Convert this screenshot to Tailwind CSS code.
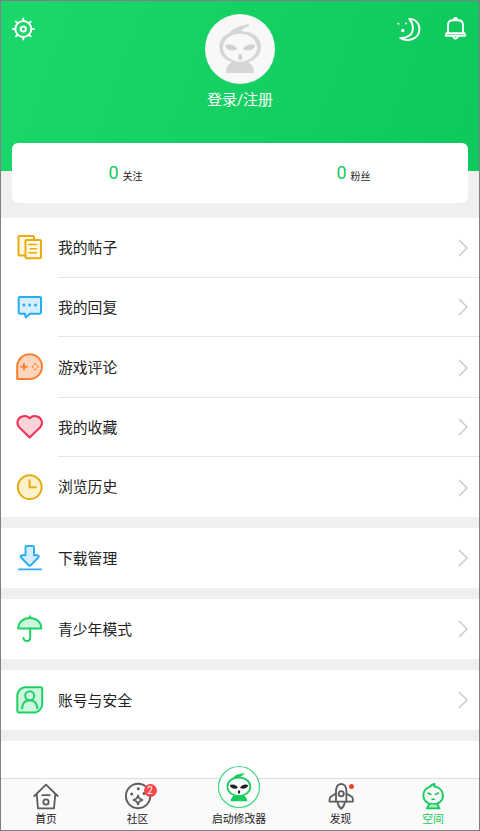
<!DOCTYPE html>
<html lang="zh-CN">
<head>
<meta charset="utf-8">
<title>空间</title>
<script src="https://cdn.jsdelivr.net/npm/@tailwindcss/browser@4"></script>
</head>
<body class="bg-white">
<div class="w-[480px] h-[831px] border border-[#808080] bg-[#efefef] overflow-hidden flex flex-col text-[#222] font-['Roboto','Noto_Sans_CJK_SC',sans-serif]">

  <header class="h-[170px] shrink-0 bg-linear-[110deg] from-[#1cd76a] to-[#0ec85b] flex justify-between items-start text-white">
    <div class="w-[110px] pl-[9px] pt-[15px]">
      <svg class="size-[26px]" viewBox="10 16 26 26" fill="none" stroke="currentColor" stroke-width="2">
        <circle cx="23.3" cy="29" r="8"/><circle cx="23.3" cy="29" r="2.6"/>
        <path stroke-linecap="round" stroke-width="1.9" d="M23.3 20.5v-2M23.3 37.5v2M14.8 29h-2M31.8 29h2M17.2 22.9l-1.3-1.3M29.4 22.9l1.3-1.3M17.2 35.1l-1.3 1.3M29.4 35.1l1.3 1.3"/>
      </svg>
    </div>
    <div class="flex flex-col items-center pt-[13px]">
      <svg class="size-[70px]" viewBox="0 0 70 70">
        <circle cx="35" cy="35" r="35" fill="#f8f8f8"/>
        <path d="M43.6 10C34 12 27 14.500 24.500 18.700C18 21.500 14.300 26.500 14.300 33C14.300 43 23 49 35 49S56 43 56 33C56 23.500 48.500 17.500 36.500 17.300C37.500 14.500 40 14 44.500 12.300Z" fill="#d6d6d6"/>
        <ellipse cx="35.100" cy="33.700" rx="17" ry="14" fill="#f8f8f8"/>
        <path d="M20 31C24 29.300 31 31.500 32.300 35C29 37.500 21 36.800 20 31ZM50.300 31C46.300 29.300 39.300 31.500 38 35C41.300 37.500 49.300 36.800 50.300 31Z" fill="#d0d0d0"/>
        <ellipse cx="35.200" cy="43" rx="2" ry="3" fill="#d0d0d0"/>
        <path d="M21 59C21 53.500 23.500 49.500 27.500 47.800Q35 49.800 42.500 47.800C46.500 49.500 49 53.500 49 59Z" fill="#d6d6d6"/>
      </svg>
      <div class="mt-[5px] text-[15px] leading-[22px]">登录/注册</div>
    </div>
    <div class="w-[110px] pr-[10px] pt-[15px] flex justify-end gap-[21px]">
      <svg class="size-[27px]" viewBox="395 16 27 27" fill="none" stroke="currentColor" stroke-width="1.9" stroke-linejoin="round">
        <path d="M409.300 18.900C416 18.900 419.600 24 419.400 29.500C419 39 408 42.500 400.200 38C408 38.400 413 34.500 412.900 28C412.900 24 411.500 21.500 409.300 18.900Z"/>
        <g fill="currentColor" stroke="none"><circle cx="398.400" cy="23.800" r="1"/><circle cx="406" cy="23.400" r="1"/><circle cx="402.800" cy="30.500" r="1.700"/></g>
      </svg>
      <svg class="size-[26px]" viewBox="443 16 26 26" fill="none" stroke="currentColor" stroke-width="1.900" stroke-linejoin="round" stroke-linecap="round">
        <path d="M448 33.500V25Q448 20.300 453 20.300H458Q463 20.300 463 25V33.500M454 19.500Q454 18 455.500 18T457 19.500"/>
        <path d="M446.500 33.200H464.500L465.300 35.700H445.700Z"/>
        <path d="M453 36.600Q455.500 40.800 458 36.600"/>
      </svg>
    </div>
  </header>

  <section class="relative -mt-7 mx-[11px] h-[60px] shrink-0 mb-[15px] rounded-md bg-white grid grid-cols-2">
    <div class="flex justify-center items-start gap-1 pt-[16px] pr-px"><span class="text-[18px] leading-7 text-[#16c95f]">0</span><span class="pt-[10px] text-[10px] leading-4">关注</span></div>
    <div class="flex justify-center items-start gap-1 pt-[16px] pr-px"><span class="text-[18px] leading-7 text-[#16c95f]">0</span><span class="pt-[10px] text-[10px] leading-4">粉丝</span></div>
  </section>

  <main class="flex-1 min-h-0 overflow-hidden flex flex-col gap-[11px] text-[14.8px]">
    <ul class="bg-white shrink-0 h-[299px] overflow-hidden">
      <li class="h-[60px] flex items-center pl-[11px]">
        <svg class="w-[36px] h-[36px] mr-[10px]" viewBox="12 230 36 36" fill="#fff8e3" stroke="#eaac10" stroke-width="2" stroke-linejoin="round" stroke-linecap="round">
          <rect x="18.500" y="236" width="15.500" height="19.500" rx="1"/><rect x="25.500" y="240" width="15.500" height="18.300" rx="1"/>
          <path stroke-width="1.600" d="M28.800 244.500H36.500M30.300 248.700H36.500M28.800 252.800H36.500"/>
        </svg>
        <div class="flex-1 h-full border-b border-[#e5e5e5] flex items-center justify-between pr-2.5"><span class="pt-0.5">我的帖子</span>
          <svg class="w-3 h-5" viewBox="0 0 12 20" fill="none" stroke="#cbcbcb" stroke-width="1.500"><path d="M2 2l8 8-8 8"/></svg></div>
      </li>
      <li class="h-[60px] flex items-center pl-[11px]">
        <svg class="w-[36px] h-[36px] mr-[10px]" viewBox="12 289.500 36 36" fill="#d5edfc" stroke="#25aef5" stroke-width="2" stroke-linejoin="round">
          <path d="M20 296.400H39.700Q41 296.400 41 297.700V312Q41 313.300 39.700 313.300H30L25.800 317L24.800 313.300H20Q18.700 313.300 18.700 312V297.700Q18.700 296.400 20 296.400Z"/>
          <g fill="#25aef5" stroke="none"><circle cx="23.900" cy="304.500" r="1.500"/><circle cx="29.700" cy="304.500" r="1.500"/><circle cx="35.500" cy="304.500" r="1.500"/></g>
        </svg>
        <div class="flex-1 h-[59px] mb-px border-b border-[#e5e5e5] flex items-center justify-between pr-2.5"><span class="pt-0.5">我的回复</span>
          <svg class="w-3 h-5" viewBox="0 0 12 20" fill="none" stroke="#cbcbcb" stroke-width="1.500"><path d="M2 2l8 8-8 8"/></svg></div>
      </li>
      <li class="h-[60px] flex items-center pl-[11px]">
        <svg class="w-[36px] h-[36px] mr-[10px]" viewBox="12 350 36 36" fill="#fdd5bd" stroke="#f8802f" stroke-width="2" stroke-linejoin="round">
          <path d="M17.200 379V366.500A12.400 12.400 0 1 1 29.600 379Z"/>
          <path stroke-width="2" d="M24 363.200V370.200M20.500 366.700H27.500"/>
          <path stroke-width="1.200" fill="none" stroke-dasharray="2.800 1.400" stroke-dashoffset="1.400" d="M35.200 363.700L38.200 366.700L35.200 369.700L32.200 366.700Z"/>
        </svg>
        <div class="flex-1 h-full border-b border-[#e5e5e5] flex items-center justify-between pr-2.5"><span class="pt-0.5">游戏评论</span>
          <svg class="w-3 h-5" viewBox="0 0 12 20" fill="none" stroke="#cbcbcb" stroke-width="1.500"><path d="M2 2l8 8-8 8"/></svg></div>
      </li>
      <li class="h-[60px] flex items-center pl-[11px]">
        <svg class="w-[36px] h-[36px] mr-[10px]" viewBox="12 410 36 36" fill="#fdd3db" stroke="#ee3356" stroke-width="2" stroke-linejoin="round">
          <path d="M29.700 437.500L19.200 427.300C16 423.800 17.300 418.300 21.600 416.700C25 415.500 27.800 416.300 29.700 418.200C31.600 416.300 34.400 415.500 37.800 416.700C42.100 418.300 43.400 423.800 40.200 427.300Z"/>
        </svg>
        <div class="flex-1 h-[59px] mb-px border-b border-[#e5e5e5] flex items-center justify-between pr-2.5"><span class="pt-0.5">我的收藏</span>
          <svg class="w-3 h-5" viewBox="0 0 12 20" fill="none" stroke="#cbcbcb" stroke-width="1.500"><path d="M2 2l8 8-8 8"/></svg></div>
      </li>
      <li class="h-[59px] flex items-center pl-[11px]">
        <svg class="w-[36px] h-[36px] mr-[10px]" viewBox="12 469.500 36 36" fill="#fdf1cc" stroke="#e5ac14" stroke-width="2">
          <circle cx="29.700" cy="486.700" r="11.900"/><path fill="none" d="M29.600 479V486.800H36.700"/>
        </svg>
        <div class="flex-1 h-full flex items-center justify-between pr-2.5"><span>浏览历史</span>
          <svg class="w-3 h-5" viewBox="0 0 12 20" fill="none" stroke="#cbcbcb" stroke-width="1.500"><path d="M2 2l8 8-8 8"/></svg></div>
      </li>
    </ul>

    <div class="bg-white shrink-0 h-[60px] flex items-center pl-[11px] pr-2.5">
      <svg class="w-[36px] h-[36px] mr-[10px]" viewBox="12 540 36 36" fill="#d5edfc" stroke="#2dadf3" stroke-width="1.900" stroke-linejoin="round" stroke-linecap="round">
        <path d="M26.500 546H33Q34 546 34 547V555.300H37.800Q39.500 555.700 38.300 557.500L31 565Q29.700 566.300 28.400 565L21.100 557.500Q19.900 555.700 21.600 555.300H25.500V547Q25.500 546 26.500 546Z"/><path d="M18.800 569.400H41"/>
      </svg>
      <span class="flex-1 pt-0.5">下载管理</span>
      <svg class="w-3 h-5" viewBox="0 0 12 20" fill="none" stroke="#cbcbcb" stroke-width="1.500"><path d="M2 2l8 8-8 8"/></svg>
    </div>

    <div class="bg-white shrink-0 h-[60px] flex items-center pl-[11px] pr-2.5">
      <svg class="w-[36px] h-[36px] mr-[10px]" viewBox="12 611 36 36" fill="none" stroke="#1ed266" stroke-width="2" stroke-linejoin="round" stroke-linecap="round">
        <path fill="#cdf6dd" d="M18.300 628.500C18.300 622 23.500 618 29.900 618S41.300 622 41.300 628.500Z"/><path d="M30 616.300V618M30.200 628.500V637.500Q30.200 641 27 641T23.500 638"/>
      </svg>
      <span class="flex-1 pt-0.5">青少年模式</span>
      <svg class="w-3 h-5" viewBox="0 0 12 20" fill="none" stroke="#cbcbcb" stroke-width="1.500"><path d="M2 2l8 8-8 8"/></svg>
    </div>

    <div class="bg-white shrink-0 h-[60px] flex items-center pl-[11px] pr-2.5">
      <svg class="w-[36px] h-[36px] mr-[10px]" viewBox="12 682 36 36" fill="none" stroke="#1ed266" stroke-width="2" stroke-linejoin="round" stroke-linecap="round">
        <path fill="#cdf6dd" d="M24.500 687.300H40.800Q42.200 687.300 42.200 688.700V705.500Q40.500 711 35.500 712.500H18.700Q17.300 712.500 17.300 711.100V694.500Q18.500 688.500 24.500 687.300Z"/>
        <circle cx="29.700" cy="695.800" r="4.500"/><path d="M22 708.300C22.500 703 25.500 700.300 29.700 700.300S36.900 703 37.400 708.300"/>
      </svg>
      <span class="flex-1 pt-0.5">账号与安全</span>
      <svg class="w-3 h-5" viewBox="0 0 12 20" fill="none" stroke="#cbcbcb" stroke-width="1.500"><path d="M2 2l8 8-8 8"/></svg>
    </div>

    <div class="bg-white flex-1"></div>
  </main>

  <nav class="relative h-[52px] shrink-0 bg-[#fafafa] border-t border-[#dedede] grid grid-cols-[90px_93px_110px_93px_92px] text-[10.8px] leading-4">
    <a class="flex flex-col items-center pt-[2px]">
      <svg class="w-[30px] h-[30px] mb-px" viewBox="31 781 30 30" fill="none" stroke="#5c5c5c" stroke-width="1.800" stroke-linejoin="round" stroke-linecap="round">
        <path d="M34.300 796L46 784.700L57.700 796M36.700 794.200L38 808.300H54L55.300 794.200"/><path d="M42.300 795.200H49.700"/><circle cx="46" cy="802" r="2.700"/>
      </svg><span>首页</span>
    </a>
    <a class="flex flex-col items-center pt-[2px]">
      <div class="relative mb-px">
        <svg class="w-[30px] h-[30px]" viewBox="122.500 781 30 30" fill="none" stroke="#5c5c5c" stroke-width="1.900">
          <circle cx="137.600" cy="796" r="12.200"/>
          <path stroke-width="1.700" stroke-linejoin="round" d="M137.500 795.500L138.900 798.600L142 800L138.900 801.400L137.500 804.500L136.100 801.400L133 800L136.100 798.600Z"/>
          <g fill="#5c5c5c" stroke="none"><circle cx="131.200" cy="794" r="1.500"/><circle cx="137.800" cy="788.800" r="1.500"/><circle cx="143.600" cy="793.600" r="1.500"/></g>
        </svg>
        <span class="absolute left-[21px] top-[3px] size-[13px] rounded-full bg-[#f9474c] text-white text-[10px] leading-[13px] text-center">2</span>
      </div><span>社区</span>
    </a>
    <a class="flex flex-col items-center -mt-[14px]">
      <svg class="w-[44px] h-[44px] mb-[3px]" viewBox="217 765 44 44">
        <circle cx="239" cy="787" r="20.500" fill="#fff" stroke="#3fd87c" stroke-width="1.200"/>
        <path d="M243.900 773.300C239 773.800 235 775 233.200 777.500C228.600 779.500 226.500 783 226.500 786.500C226.500 793 232 796.300 238.900 796.300S251.200 793 251.200 786.500C251.200 781 247 777.500 240.500 776.800C241.500 775.600 243.200 775.200 244.700 774Z" fill="#19cc5e"/>
        <ellipse cx="238.800" cy="786.800" rx="10.600" ry="8.400" fill="#fff"/>
        <path d="M229.800 785C233 783.600 237 785 238 787.700C235.500 789.700 230.600 788.900 229.800 785ZM248.200 785C245 783.600 241 785 240 787.700C242.500 789.700 247.400 788.900 248.200 785Z" fill="#222"/>
        <ellipse cx="239" cy="792" rx="1.200" ry="1.800" fill="#222"/>
        <path d="M230.600 801.300C230.800 798.500 232.300 796.200 234.500 795.200Q239 796.500 243.500 795.200C245.700 796.200 247.200 798.500 247.400 801.300Z" fill="#19cc5e"/>
      </svg><span>启动修改器</span>
    </a>
    <a class="flex flex-col items-center pt-[2px]">
      <div class="relative mb-px">
        <svg class="w-[30px] h-[30px]" viewBox="325.500 781 30 30" fill="none" stroke="#5c5c5c" stroke-width="1.800" stroke-linejoin="round">
          <path d="M335.500 801.700V791Q335.700 784.300 340.700 783.900Q345.700 784.300 345.900 791V801.700Z"/>
          <path d="M335.500 793.500L329.700 797Q328.800 799 329 801.700H335.500M345.900 793.500L351.700 797Q352.600 799 352.400 801.700H345.900"/>
          <circle cx="340.700" cy="793.800" r="2.600"/><path d="M337.200 802Q337.200 806 340.700 808.800Q344.200 806 344.200 802"/>
        </svg>
        <span class="absolute left-[23px] top-[3px] size-[5px] rounded-full bg-[#f4432f]"></span>
      </div><span>发现</span>
    </a>
    <a class="flex flex-col items-center pt-[2px] text-[#18c95c]">
      <svg class="w-[30px] h-[30px] mb-px" viewBox="418.500 781 30 30" fill="none" stroke="currentColor" stroke-width="1.900" stroke-linejoin="round" stroke-linecap="round">
        <path d="M435.200 784Q431.500 784.500 430.500 786.800C426 788 423.900 791.500 423.900 795.500C423.900 800.500 428 804.300 433.700 804.300S443.500 800.500 443.500 795.500C443.500 791 440 787.300 434.500 786.300Q434.300 785 435.200 784Z"/>
        <path d="M429.500 804.500L427.400 808.400H440L437.900 804.500" fill="#a4ebc1"/>
        <path stroke-width="1.600" d="M428.500 793L431.500 794.500M438.900 793L435.900 794.500M432.500 799.300H434.900"/>
      </svg><span>空间</span>
    </a>
  </nav>
</div>
</body>
</html>
